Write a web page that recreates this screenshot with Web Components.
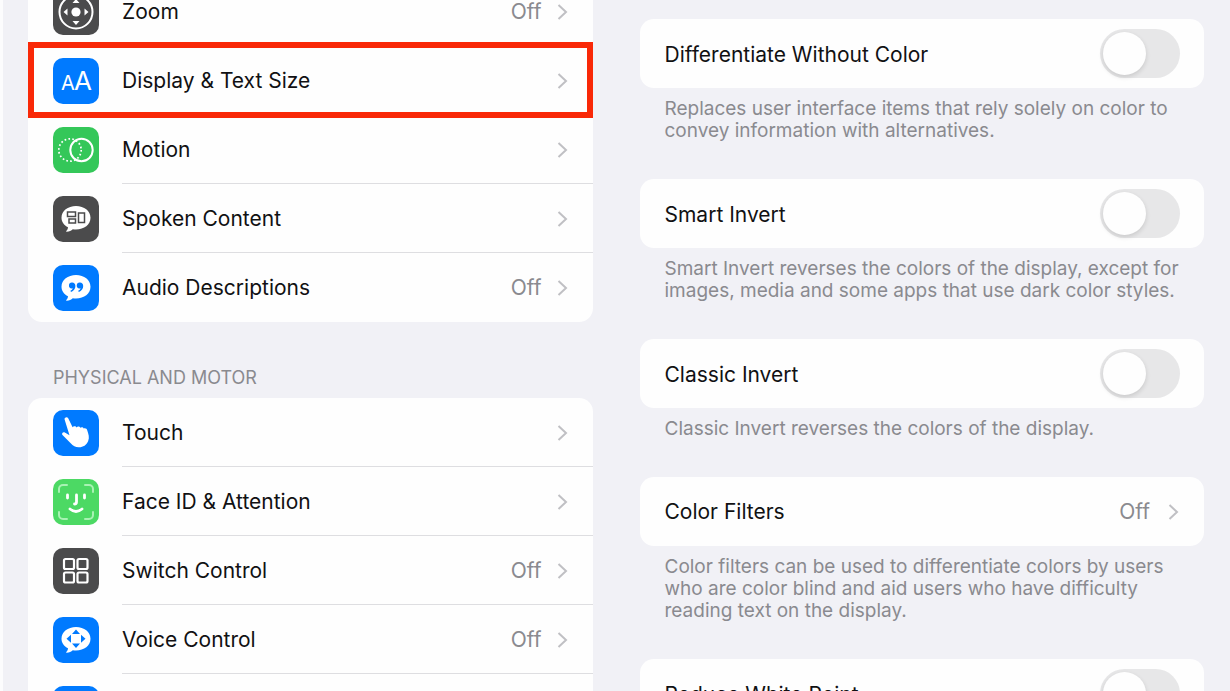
<!DOCTYPE html>
<html lang="en">
<head>
<meta charset="utf-8">
<title>Accessibility Settings</title>
<style>
  html, body { margin: 0; height: 100%; }
  body { background: #f1f1f6; overflow: hidden; font-family: Inter, "Liberation Sans", sans-serif; color: #111113; }
</style>
</head>
<body>
<settings-page>
  <settings-list slot="primary">
    <settings-group>
      <nav-row icon="zoom" value="Off">Zoom</nav-row>
      <nav-row icon="text" highlighted>Display &amp; Text Size</nav-row>
      <nav-row icon="motion">Motion</nav-row>
      <nav-row icon="spoken">Spoken Content</nav-row>
      <nav-row icon="audio" value="Off">Audio Descriptions</nav-row>
    </settings-group>
    <settings-group heading="PHYSICAL AND MOTOR">
      <nav-row icon="touch">Touch</nav-row>
      <nav-row icon="face">Face ID &amp; Attention</nav-row>
      <nav-row icon="switch" value="Off">Switch Control</nav-row>
      <nav-row icon="voice" value="Off">Voice Control</nav-row>
      <nav-row icon="blank"></nav-row>
    </settings-group>
  </settings-list>
  <settings-list slot="detail">
    <settings-group footer="Replaces user interface items that rely solely on color to convey information with alternatives.">
      <toggle-row>Differentiate Without Color</toggle-row>
    </settings-group>
    <settings-group footer="Smart Invert reverses the colors of the display, except for images, media and some apps that use dark color styles.">
      <toggle-row>Smart Invert</toggle-row>
    </settings-group>
    <settings-group footer="Classic Invert reverses the colors of the display.">
      <toggle-row>Classic Invert</toggle-row>
    </settings-group>
    <settings-group footer="Color filters can be used to differentiate colors by users who are color blind and aid users who have difficulty reading text on the display.">
      <nav-row value="Off">Color Filters</nav-row>
    </settings-group>
    <settings-group>
      <toggle-row>Reduce White Point</toggle-row>
    </settings-group>
  </settings-list>
</settings-page>

<script>
const bubble = '<path fill="#fff" d="M23 10c8.200 0 14.500 5 14.500 11.800S31.200 33.500 23 33.500c-1.100 0-2.200-.1-3.200-.3-1.500 1.500-3.600 2.500-6 2.500-.7 0-.8-.6-.3-1 .9-.8 1.400-1.800 1.500-3.400C11 29.200 8.500 25.800 8.500 21.800 8.500 15 14.800 10 23 10Z"/>';
const ICONS = {
  zoom: ['#4b4b4c', '<circle cx="23" cy="23" r="16.500" fill="none" stroke="#fff" stroke-width="2"/><g fill="#fff"><circle cx="23" cy="23" r="4.600"/><path d="M23 10l3.500 4h-7zM23 36l3.500-4h-7zM10.500 23l4-3.500v7zM35.500 23l-4-3.500v7z"/></g>'],
  text: ['#007aff', '<g fill="#fff" text-anchor="middle"><text x="15" y="32" font-size="20">A</text><text x="30" y="32" font-size="26">A</text></g>'],
  motion: ['#34c759', '<g fill="none" stroke="#fff"><circle cx="17" cy="23" r="11.200" stroke-width="1.700" stroke-dasharray="1.700 2.210"/><circle cx="28.500" cy="23" r="11.200" stroke-width="2"/></g>'],
  spoken: ['#4b4b4c', bubble + '<g fill="none" stroke="#4b4b4c" stroke-width="1.500"><rect x="14.500" y="16" width="8" height="4.500"/><rect x="16" y="23" width="6.500" height="4"/><rect x="25.500" y="17" width="6" height="9.500"/></g>'],
  audio: ['#007aff', bubble + '<g fill="#007aff"><path d="M19.200 17.500a3 3 0 1 0-.5 6c.5 0 .9-.1 1.200-.3-.4 1.300-1.300 2-2.500 2.600l.6 1.100c2.800-1.100 4.400-3.200 4.400-5.900 0-2.100-1.300-3.500-3.200-3.500Z"/><path d="M27 17.500a3 3 0 1 0-.5 6c.5 0 .9-.1 1.200-.3-.4 1.300-1.300 2-2.500 2.600l.6 1.100c2.800-1.100 4.400-3.200 4.400-5.900 0-2.100-1.300-3.500-3.200-3.500Z"/></g>'],
  touch: ['#007aff', '<path fill="#fff" d="M11.600 9.500c-.6-2 2.600-3.200 3.600-1.200l4.400 9c.7-1.500 3.300-1.500 4 .1.900-1.300 3.200-1 3.700.4 1-1.100 3-.7 3.400.8 1.500-.8 3.200.1 3.600 1.800 1.200 3.700 2.400 7 .8 10.900-1.600 4-5.300 6.200-9.400 6-3.200-.1-5.700-1.500-8-4l-8.200-8.300c-1.300-1.500.5-3.600 2.300-2.600l4.700 2.800Z"/>'],
  face: ['#4cd964', '<g fill="none" stroke="#fff" stroke-linecap="round"><path stroke="#a8f2b3" stroke-width="2" d="M6 13v-3a4 4 0 0 1 4-4h4M32 6h4a4 4 0 0 1 4 4v3M40 33v3a4 4 0 0 1-4 4h-4M14 40h-4a4 4 0 0 1-4-4v-3"/><path stroke-width="2.800" d="M14.500 16v3M31.500 16v3M23.500 16v7q0 2-2 2M17 30q6 5 12 0"/></g>'],
  switch: ['#4b4b4c', '<g fill="none" stroke="#fff" stroke-width="2.200"><rect x="11" y="11" width="10" height="10" rx="1.500"/><rect x="24.500" y="11" width="10" height="10" rx="1.500"/><rect x="11" y="24.500" width="10" height="10" rx="1.500"/><rect x="24.500" y="24.500" width="10" height="10" rx="1.500"/></g>'],
  voice: ['#007aff', bubble + '<g fill="#007aff"><path d="M23 12.500l4 4.500h-8zM23 31l4-4.500h-8zM13.500 21.700l4.500-4v8zM32.500 21.700l-4.500-4v8z"/></g>'],
  blank: ['#007aff', '']
};

function define(name, html, setup) {
  const template = document.createElement('template');
  template.innerHTML = html;
  customElements.define(name, class extends HTMLElement {
    connectedCallback() {
      if (this.shadowRoot) return;
      const root = this.attachShadow({ mode: 'open' });
      root.append(template.content.cloneNode(true));
      if (setup) setup(this, root);
    }
  });
}

define('settings-page', `
  <style>
    :host { display: grid; grid-template-columns: 1fr 1fr; gap: 47px; height: 100vh; box-sizing: border-box;
      padding: 0 26px 0 25px; border-left: 3px solid #fcfcfd; overflow: hidden; }
    section { min-width: 0; }
    section:last-child { padding-top: 19px; }
    .primary { margin-top: -23px; }
  </style>
  <section class="primary"><slot name="primary"></slot></section>
  <section><slot name="detail"></slot></section>`);

define('settings-list', `
  <style>:host { display: flex; flex-direction: column; gap: 37px; }</style>
  <slot></slot>`);

define('settings-group', `
  <style>
    :host { display: block; }
    .card { background: #fefefe; border-radius: 14px; }
    h2, p { margin: 0; color: #8a8a8f; font-weight: 400; line-height: 22px; }
    h2 { font-size: 18px; padding: 8px 25px 9px; }
    p { font-size: 19px; padding: 10px 12px 0 25px; }
  </style>
  <div class="card"><slot></slot></div>`,
  (host, root) => {
    const card = root.querySelector('.card');
    for (const [attr, tag, place] of [['heading', 'h2', 'before'], ['footer', 'p', 'after']]) {
      if (!host.hasAttribute(attr)) continue;
      const el = document.createElement(tag);
      el.textContent = host.getAttribute(attr);
      card[place](el);
    }
  });

define('app-icon', `
  <style>
    :host { display: block; flex: none; width: 46px; height: 46px; border-radius: 10px; overflow: hidden; }
    svg { display: block; width: 100%; height: 100%; }
  </style>
  <svg viewBox="0 0 46 46" aria-hidden="true"></svg>`,
  (host, root) => {
    const [color, art] = ICONS[host.getAttribute('name')];
    host.style.background = color;
    root.querySelector('svg').innerHTML = art;
  });

define('nav-row', `
  <style>
    :host { display: block; position: relative; }
    a { display: flex; align-items: center; gap: 23px; padding-left: 25px; color: inherit; text-decoration: none; }
    .body { flex: 1; display: flex; align-items: center; height: 69px; box-sizing: border-box; padding: 2px 25px 0 0;
      border-bottom: 1px solid #dedee1; font-size: 21px; line-height: 28px; }
    :host(:last-child) .body, :host([highlighted]) .body { border-bottom-color: transparent; }
    .label { flex: 1; }
    .value { color: #8a8a8f; margin-right: 18px; }
    :host([icon]) .value { margin-right: 15px; }
    .chevron { width: 11px; height: 18px; fill: none; stroke: #c0c0c4; stroke-width: 2; }
    :host([highlighted])::after { content: ""; position: absolute; inset: -4px 0 -3px; border: 6px solid #f92807; pointer-events: none; }
  </style>
  <a href="#">
    <span class="body"><span class="label"><slot></slot></span><span class="value"></span>
    <svg class="chevron" viewBox="0 0 11 18" aria-hidden="true"><path d="M1.500 2l7.500 7-7.500 7"/></svg></span>
  </a>`,
  (host, root) => {
    root.querySelector('.value').textContent = host.getAttribute('value') || '';
    if (host.hasAttribute('icon')) {
      const icon = document.createElement('app-icon');
      icon.setAttribute('name', host.getAttribute('icon'));
      root.querySelector('a').prepend(icon);
    }
  });

define('toggle-row', `
  <style>
    :host { display: block; }
    label { display: flex; align-items: center; justify-content: space-between; height: 69px; padding: 0 24px 0 25px;
      font-size: 21px; line-height: 28px; }
    span { padding-top: 2px; }
    input { appearance: none; flex: none; display: flex; align-items: center; width: 80px; height: 49px; margin: 0; padding: 0 3px;
      box-sizing: border-box; border-radius: 25px; background: #e7e7e8; }
    input::before { content: ""; width: 43px; height: 43px; border-radius: 50%; background: #fefefe; box-shadow: 0 2px 5px #0002; }
    input:checked { background: #34c759; justify-content: flex-end; }
  </style>
  <label><span><slot></slot></span><input type="checkbox" role="switch"></label>`);
</script>
</body>
</html>
